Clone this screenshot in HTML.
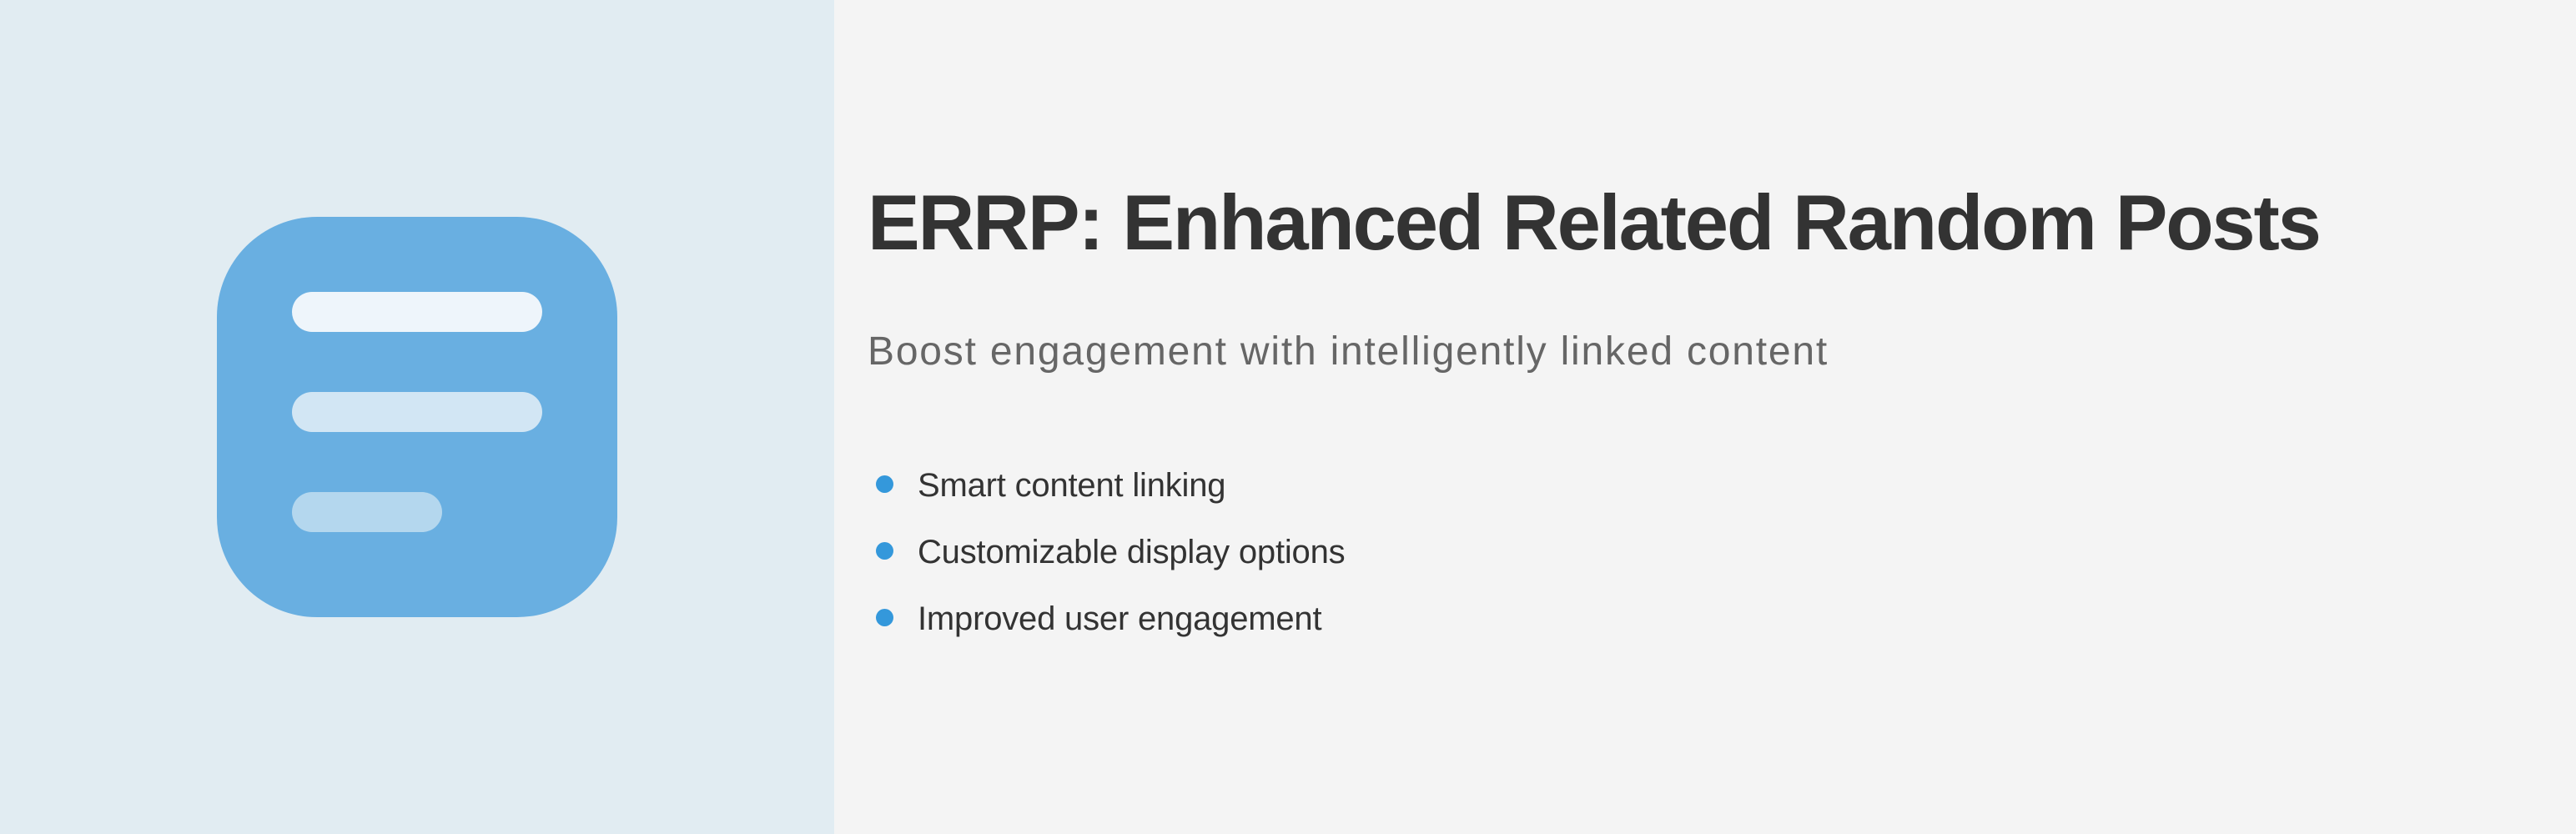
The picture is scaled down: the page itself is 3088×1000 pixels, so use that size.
<!DOCTYPE html>
<html><head><meta charset="utf-8"><style>
html,body{margin:0;padding:0;width:3088px;height:1000px;overflow:hidden;background:#f4f4f4;font-family:"Liberation Sans",sans-serif}
.left{position:absolute;left:0;top:0;width:1000px;height:1000px;background:#e1ecf2}
.icon{position:absolute;left:260px;top:260px;width:480px;height:480px;border-radius:120px;background:#69afe1}
.bar{position:absolute;left:90px;height:48px;border-radius:24px}
.t{position:absolute;left:1040px;white-space:nowrap;margin:0}
h1.t{top:207px;font-size:94px;line-height:120px;font-weight:bold;color:#333;letter-spacing:-2.2px}
.sub{top:394px;font-size:48px;line-height:56px;color:#666;letter-spacing:1.8px}
.li{font-size:40px;line-height:50px;color:#333;left:1100px;letter-spacing:-0.2px}
.dot{position:absolute;left:1050px;width:21px;height:21px;border-radius:50%;background:#3498db}
</style></head><body>
<div class="left"><div class="icon">
<div class="bar" style="top:90px;width:300px;background:#eef5fb"></div>
<div class="bar" style="top:210px;width:300px;background:#d2e6f4"></div>
<div class="bar" style="top:330px;width:180px;background:#b4d7ee"></div>
</div></div>
<h1 class="t">ERRP: Enhanced Related Random Posts</h1>
<div class="t sub">Boost engagement with intelligently linked content</div>
<div class="dot" style="top:570px"></div><div class="t li" style="top:557px">Smart content linking</div>
<div class="dot" style="top:650px"></div><div class="t li" style="top:637px">Customizable display options</div>
<div class="dot" style="top:730px"></div><div class="t li" style="top:717px">Improved user engagement</div>
</body></html>
